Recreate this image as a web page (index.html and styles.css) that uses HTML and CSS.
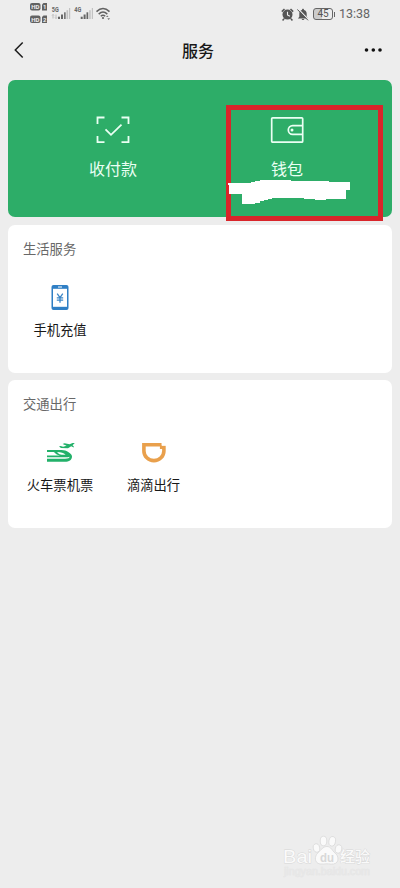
FILE: index.html
```html
<!DOCTYPE html>
<html lang="zh-CN">
  <head>
    <meta charset="UTF-8" />
    <meta name="viewport" content="width=device-width, initial-scale=1.0" />
    <title>服务</title>
    <link rel="stylesheet" href="styles.css">
  </head>
  <body>
    <!-- Status bar -->
    <div class="status-bar">
      <svg class="signals" width="82" height="24" viewBox="0 0 82 24">
        <g fill="#626262">
          <rect x="0" y="1" width="10.5" height="7.5" rx="2" />
          <path d="M13.5 1H17v7.5h-5V2.5z" />
          <rect x="0" y="13.5" width="10.5" height="7.5" rx="2" />
          <path d="M13.5 13.5H17V21h-5v-6z" />
        </g>
        <g class="hd-text">
          <text x="1.3" y="7">HD</text>
          <text x="13" y="7">1</text>
          <text x="1.3" y="19.5">HD</text>
          <text x="13" y="19.5">2</text>
        </g>
        <g class="net-text">
          <text x="21.8" y="10.2" textLength="7" lengthAdjust="spacingAndGlyphs">5G</text>
          <text x="44.2" y="10.2" textLength="7" lengthAdjust="spacingAndGlyphs">4G</text>
        </g>
        <path d="M23 12.5v4m-1-3 1-1 1 1M26 12.5v4m-1-1 1 1 1-1" fill="none" stroke="#aaa" stroke-width=".7" />
        <g fill="#666">
          <rect x="28" y="14.7" width="2" height="2.3" />
          <rect x="31" y="12.5" width="2" height="4.5" />
          <rect x="50.7" y="14.7" width="2" height="2.3" />
          <rect x="53.6" y="12.5" width="2" height="4.5" />
          <rect x="56.5" y="10.3" width="1.7" height="6.7" />
        </g>
        <rect x="34" y="10.3" width="1.7" height="6.7" fill="#777" />
        <g fill="#c2c2c2">
          <rect x="36.5" y="8.2" width="1.6" height="8.8" />
          <rect x="39" y="6" width="1.2" height="11" />
          <rect x="59.2" y="8.2" width="1.5" height="8.8" />
          <rect x="61.8" y="6" width="1.2" height="11" />
        </g>
        <g fill="none" stroke="#626262" stroke-width="1.5">
          <path d="M66.5 9.6Q73 3.3 79.5 9.6" />
          <path d="M68.7 12.1Q73 8 77.3 12.1" />
          <path d="M70.8 14.3Q73 12.3 75.2 14.3" />
        </g>
        <circle cx="73" cy="16" r="1.1" fill="#626262" />
        <path d="m76 15 1.3-1.5 1.3 1.5zm1.3 1.2h2.8L78.7 18z" fill="#777" />
      </svg>
      <div class="status-right">
        <svg width="13" height="13" viewBox="0 0 13 13">
          <circle cx="6.5" cy="6.6" r="5" fill="#555" />
          <path d="M.8 3.6 3.5 1M12.2 3.6 9.5 1M3 10.7l-1.4 1.7M10 10.7l1.4 1.7" stroke="#555" stroke-width="1.5" />
          <path d="M6.5 3.8v3.1l2.4 1.4" fill="none" stroke="#eee" stroke-width="1.1" />
        </svg>
        <svg width="12" height="13" viewBox="0 0 12 13">
          <path d="M6 .7c.8 0 1 .7 1 1.2C9 2.4 9.7 4 9.7 5.8v3l1.4 1.6H.9l1.4-1.6v-3C2.3 4 3 2.4 5 1.9 5 1.4 5.2.7 6 .7zM4.7 11h2.6c-.2 1.4-2.4 1.4-2.6 0z" fill="#555" />
          <path d="M1 .7 12 12" stroke="#ececec" stroke-width="1.1" />
          <path d="M.3 1.4 11 12.3" stroke="#555" />
        </svg>
        <span class="battery">45</span>
        <span class="clock">13:38</span>
      </div>
    </div>

    <!-- Nav bar -->
    <div class="nav-bar">
      <svg width="18" height="18" viewBox="0 0 18 18">
        <path d="M8.7 1.5 1.3 9l7.4 7.5" fill="none" stroke="#1c1c1c" stroke-width="1.5" />
      </svg>
      <h1>服务</h1>
      <svg width="18" height="4" viewBox="0 0 18 4">
        <g fill="#111">
          <circle cx="2.5" cy="2" r="1.8" />
          <circle cx="9.3" cy="2" r="1.8" />
          <circle cx="16" cy="2" r="1.8" />
        </g>
      </svg>
    </div>

    <!-- Payment and wallet -->
    <div class="pay-card">
      <div class="pay-item">
        <svg width="34" height="28" viewBox="0 0 34 28">
          <path d="M1.5 8V1.5h7M25.5 1.5h7V8M32.5 20v6.2h-7M8.5 26.2h-7V20" fill="none" stroke="#eafff3" stroke-width="1.8" />
          <path d="m9.5 13.3 5.500 5.500L25.500 8.700" fill="none" stroke="#eafff3" stroke-width="1.8" />
        </svg>
        <span>收付款</span>
      </div>
      <div class="pay-item wallet">
        <svg width="34" height="28" viewBox="0 0 34 28">
          <rect x="1.7" y="1.8" width="31" height="24.4" rx="1" fill="none" stroke="#eafff3" stroke-width="1.7" />
          <path d="M32.7 9.6h-10a4.4 4.4 0 0 0 0 8.8h10" fill="none" stroke="#eafff3" stroke-width="1.7" />
          <circle cx="22" cy="14" r="1.5" fill="#eafff3" />
        </svg>
        <span>钱包</span>
      </div>
      <div class="highlight"></div>
      <svg class="scribble" width="122" height="25" viewBox="0 0 122 25">
        <path d="M0 3h23V2h4V1h5V0h31v1h38v1h21v8h-4v9H98v1H87v-1H76v-1H44v1h-4v1h-4v1h-4v2h-5v1h-13V14H1V5H0z" fill="#fff" />
      </svg>
    </div>

    <!-- Life services -->
    <div class="card">
      <h2>生活服务</h2>
      <div class="grid">
        <div class="item">
          <svg width="36" height="30" viewBox="0 0 36 30">
            <rect x="9.5" y="2" width="17" height="25" rx="2" fill="#2f7fc5" />
            <rect x="11" y="5.8" width="14" height="18" fill="#fff" />
            <path d="M16 4h4" stroke="#fff" />
            <path d="m15.2 10.7 2.8 4 2.8-4M14.8 14.9h6.4M14.8 17.1h6.4M18 14.700v5" fill="none" stroke="#3c86c6" stroke-width="1.3" />
          </svg>
          <span>手机充值</span>
        </div>
      </div>
    </div>

    <!-- Transportation -->
    <div class="card">
      <h2>交通出行</h2>
      <div class="grid">
        <div class="item">
          <svg width="36" height="30" viewBox="0 0 36 30">
            <path d="M17 8.500l1.600-.5 2.500.7 3.500-.9-4-1.800 2-.7 5 1 3-1.300h2.200l-2.300 2.200 1.200 1v1.400l-2.500-1.300-3.200 2-7-.4z" fill="#23b16a" />
            <path d="M5 12h14.500c5 0 10.500 3.500 10.500 6.500 0 3.600-3 5.300-7 5.300H5v-3h18c3 0 4.600-.7 4.600-2-1 .4-2.200.5-4.100.5H5v-1.700h13c-2.600-.5-4-1.500-5.800-3.300l-.6-.4H5zm10 2 2 2c1 .8 3 .8 6.600.7-2-1.800-4.400-2.700-8.600-2.700z" fill="#23b16a" />
          </svg>
          <span>火车票机票</span>
        </div>
        <div class="item">
          <svg width="36" height="30" viewBox="0 0 36 30">
            <path d="M25.800 6.700H7.900v6.200a10 9.700 0 0 0 20 0V9.300h-4" fill="none" stroke="#e9a04c" stroke-width="3.600" />
            <path d="M26 4.500v3h4" fill="none" stroke="#fff" stroke-width=".7" />
          </svg>
          <span>滴滴出行</span>
        </div>
      </div>
    </div>

    <!-- Watermark -->
    <div class="watermark">
      <svg width="100" height="48" viewBox="0 0 100 48">
        <g fill="#fafafa" stroke="#d9d9d9" stroke-width=".8">
          <ellipse cx="37.5" cy="14" rx="3.2" ry="4.2" transform="rotate(-15 37.5 14)" />
          <ellipse cx="44.5" cy="7" rx="3.3" ry="4.8" />
          <ellipse cx="53.2" cy="7.3" rx="3.3" ry="4.8" transform="rotate(10 53.2 7.3)" />
          <ellipse cx="59.5" cy="15" rx="3.2" ry="4.2" transform="rotate(15 59.5 15)" />
          <path d="M48 12.5c4 0 5.2 4.2 8 6.5 3.5 2.4 5 10-1.5 11-3 .4-4-.2-6.500-.2s-4.500.5-7 .2c-6-1-5.500-8-2.200-11 3-2.800 5.200-6.500 9.200-6.500z" />
        </g>
        <g class="mark-text">
          <text x="4" y="28.500" textLength="29" lengthAdjust="spacingAndGlyphs">Bai</text>
          <text class="mark-du" x="41" y="27.5" textLength="14" lengthAdjust="spacingAndGlyphs">du</text>
          <text class="mark-cn" x="61" y="28" textLength="30" lengthAdjust="spacingAndGlyphs">经验</text>
          <text class="mark-url" x="5" y="41" textLength="86" lengthAdjust="spacingAndGlyphs">jingyan.baidu.com</text>
        </g>
      </svg>
    </div>
  </body>
</html>
```

FILE: styles.css
```css
* {
  box-sizing: border-box;
}
body {
  display: flex;
  flex-direction: column;
  height: 888px;
  margin: 0;
  padding: 0 8px;
  overflow: hidden;
  background: #ededed;
  color: #181818;
  font-family: "Noto Sans CJK SC", sans-serif;
}
svg {
  display: block;
}
h1,
h2 {
  margin: 0;
  font-weight: normal;
}
.status-bar {
  display: flex;
  justify-content: space-between;
  height: 28px;
  padding: 2px 21px 0 22px;
}
.status-right {
  display: flex;
  align-items: center;
  gap: 3px;
  height: 24px;
}
.hd-text {
  fill: #ededed;
  font: bold 6px "Roboto", sans-serif;
}
.net-text {
  fill: #666;
  font: bold 6.5px "Roboto", sans-serif;
}
.battery {
  position: relative;
  width: 20px;
  height: 12px;
  margin-left: 1px;
  border: 1px solid #666;
  border-radius: 3px;
  background: linear-gradient(90deg, #ccc 45%, #ededed 45%);
  color: #555;
  font: 10px/10px "Roboto", sans-serif;
  text-align: center;
}
.battery::after {
  content: "";
  position: absolute;
  top: 3px;
  right: -3px;
  width: 1px;
  height: 5px;
  background: #666;
}
.clock {
  width: 32px;
  margin-left: 3px;
  color: #646464;
  font: 12.5px/24px "Roboto", sans-serif;
  white-space: nowrap;
}
.nav-bar {
  display: flex;
  align-items: center;
  justify-content: space-between;
  height: 44px;
  margin-bottom: 8px;
  padding: 0 10px 0 6px;
}
.nav-bar h1 {
  margin-top: -1px;
  font-size: 16px;
  font-weight: 500;
  line-height: 24px;
}
.pay-card {
  position: relative;
  display: flex;
  height: 137px;
  margin-bottom: 8px;
  padding: 36px 18px 0;
  border-radius: 7px;
  background: #2dad68;
}
.pay-item {
  display: flex;
  flex: 1;
  flex-direction: column;
  align-items: center;
  gap: 12px;
  color: #eafff3;
  font-size: 16px;
  line-height: 24px;
}
.highlight {
  position: absolute;
  top: 25px;
  left: 218px;
  width: 157px;
  height: 116px;
  border: 5px solid #d9252a;
}
.scribble {
  position: absolute;
  top: 100px;
  left: 220px;
}
.card {
  height: 148px;
  margin-bottom: 7px;
  padding: 14px 13px 0;
  border-radius: 7px;
  background: #fff;
}
.card h2 {
  margin: 0 0 24px 2px;
  color: #686868;
  font-size: 13.3px;
  line-height: 20px;
}
.grid {
  display: grid;
  grid-template-columns: repeat(3, 93.5px);
}
.item {
  display: flex;
  flex-direction: column;
  align-items: center;
  width: 78px;
  gap: 7px;
  font-size: 13.3px;
  line-height: 20px;
  white-space: nowrap;
}
.watermark {
  align-self: flex-end;
  margin: auto 13px 6px 0;
}
.mark-text {
  fill: #fafafa;
  stroke: #d6d6d6;
  stroke-width: 0.8px;
  paint-order: stroke;
  font: 19px "Liberation Sans", sans-serif;
}
.mark-text .mark-du {
  fill: #d8d8d8;
  stroke: none;
  font-size: 13px;
  font-weight: bold;
}
.mark-text .mark-cn {
  font: 500 15px "Noto Sans CJK SC", sans-serif;
}
.mark-text .mark-url {
  fill: #e8e8e8;
  stroke: #e2e2e2;
  stroke-width: 0.4px;
  font-size: 10px;
}
```
